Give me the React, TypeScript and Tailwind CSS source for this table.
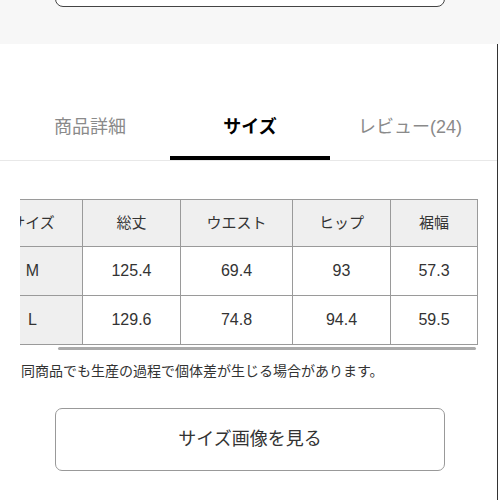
import React from "react";

const tabs = [
  { label: "商品詳細", active: false },
  { label: "サイズ", active: true },
  { label: "レビュー(24)", active: false },
];

const columns = [
  { name: "サイズ", w: "w-[100px]" },
  { name: "総丈", w: "w-[98px]" },
  { name: "ウエスト", w: "w-[112px]" },
  { name: "ヒップ", w: "w-[98px]" },
  { name: "裾幅", w: "w-[87px]" },
];

const rows = [
  ["M", "125.4", "69.4", "93", "57.3"],
  ["L", "129.6", "74.8", "94.4", "59.5"],
];

export default function App() {
  return (
    <div
      className="w-[500px] h-[500px] overflow-hidden bg-white text-[#333]"
      style={{ fontFamily: '"Liberation Sans", "Noto Sans CJK JP", sans-serif' }}
    >
      {/* 上部（前のセクションのボタン） */}
      <div className="h-[44px] bg-[#f7f7f7] overflow-hidden">
        <div className="mx-[55px] mt-[-40px] h-[47px] w-[390px] rounded-[8px] border border-[#444] bg-white" />
      </div>

      <div className="border-r border-[#333] h-[456px] w-[498px]">
        {/* タブ */}
        <div className="grid grid-cols-[160px_160px_160px] px-[10px] pt-[71px] border-b border-[#e8e8e8]">
          {tabs.map((t) => (
            <div key={t.label} className="flex flex-col items-center">
              <span
                className={
                  t.active
                    ? "text-[18px] leading-[24px] font-bold text-black"
                    : "text-[18px] leading-[24px] text-[#8a8a8a]"
                }
              >
                {t.label}
              </span>
              <div className={t.active ? "mt-[17px] h-[4px] w-full bg-black" : "mt-[17px] h-[4px] w-full"} />
            </div>
          ))}
        </div>

        {/* サイズ表 */}
        <div className="ml-[20px] mt-[38px] w-[460px] overflow-hidden">
          <table className="ml-[-38px] border-collapse text-[16px] text-[#333]">
            <thead>
              <tr className="h-[47px] bg-[#efefef]">
                {columns.map((c) => (
                  <th key={c.name} className={`${c.w} border border-[#9a9a9a] text-[15px] font-normal text-center`}>
                    {c.name}
                  </th>
                ))}
              </tr>
            </thead>
            <tbody>
              {rows.map((r) => (
                <tr key={r[0]} className="h-[49px]">
                  {r.map((v, i) => (
                    <td
                      key={i}
                      className={
                        i === 0
                          ? "border border-[#9a9a9a] bg-[#efefef] text-center"
                          : "border border-[#9a9a9a] bg-white text-center"
                      }
                    >
                      {v}
                    </td>
                  ))}
                </tr>
              ))}
            </tbody>
          </table>
          <div className="ml-[38px] mt-[2px] h-[3px] w-[418px] rounded-full bg-[#aaa]" />
        </div>

        <p className="ml-[21px] mt-[11px] text-[14px] leading-[20px] text-[#333]">
          同商品でも生産の過程で個体差が生じる場合があります。
        </p>

        <button
          type="button"
          className="ml-[55px] mt-[27px] h-[63px] w-[390px] rounded-[7px] border border-[#999] bg-white text-[18px] text-[#333]"
        >
          サイズ画像を見る
        </button>
      </div>
    </div>
  );
}
